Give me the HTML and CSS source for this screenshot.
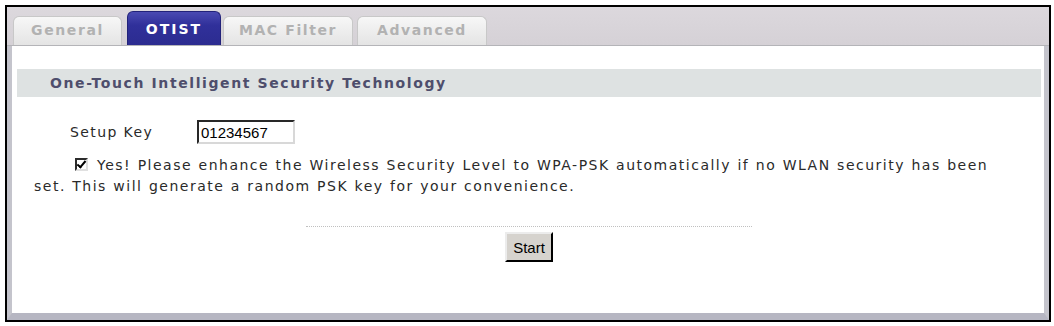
FILE: index.html
```html
<!DOCTYPE html>
<html lang="en">
  <head>
    <meta charset="UTF-8" />
    <title>Wireless LAN - OTIST</title>
    <link rel="stylesheet" href="styles.css">
  </head>
  <body>
    <div class="frame">
      <div class="tabbar">
        <div class="tab tab-general">General</div>
        <div class="tab tab-otist active">OTIST</div>
        <div class="tab tab-mac">MAC Filter</div>
        <div class="tab tab-advanced">Advanced</div>
      </div>
      <div class="panel">
        <div class="section-title">One-Touch Intelligent Security Technology</div>
        <div class="row">
          <label for="setupkey">Setup Key</label>
          <input type="text" id="setupkey" value="01234567" />
        </div>
        <div class="check-text">
          <span class="checkbox"></span>Yes! Please enhance the Wireless Security Level to WPA-PSK automatically if no WLAN security has been set. This will generate a random PSK key for your convenience.
        </div>
        <div class="divider"></div>
        <div class="actions">
          <button type="button">Start</button>
        </div>
      </div>
    </div>
  </body>
</html>
```

FILE: styles.css
```css
* {
  box-sizing: border-box;
  margin: 0;
  padding: 0;
}

body {
  background: #ffffff;
  padding: 5px 3px 5px 5px;
  font-family: "DejaVu Sans", Verdana, sans-serif;
}

.frame {
  border: 2px solid #000000;
  height: 317px;
  display: flex;
  flex-direction: column;
}

.tabbar {
  height: 39px;
  background: linear-gradient(#dcd8dd, #d5d1d6);
  display: flex;
  align-items: flex-end;
  padding-left: 6px;
  border-bottom: 1px solid #b4b4b8;
}

.tab {
  height: 29px;
  display: flex;
  align-items: center;
  justify-content: center;
  padding-bottom: 2px;
  background: linear-gradient(#f7f7f7, #e4e4e4);
  border: 1px solid #c8c8c8;
  border-bottom: none;
  border-radius: 6px 6px 0 0;
  color: #b2b2b2;
  font-size: 14px;
  font-weight: bold;
  letter-spacing: 1.6px;
}

.tab-general {
  width: 109px;
  margin-right: 5px;
}

.tab-otist {
  width: 94px;
  margin-right: 2px;
}

.tab-mac {
  width: 130px;
  margin-right: 4px;
}

.tab-advanced {
  width: 130px;
}

.tab.active {
  height: 34px;
  padding-bottom: 0;
  padding-top: 1px;
  background: linear-gradient(#4a4ab2, #30309a 40%, #2c2c90);
  border-color: #22227a;
  color: #ffffff;
  letter-spacing: 2px;
}

.panel {
  flex: 1;
  background: #ffffff;
  border-left: 5px solid #c4c4cc;
  border-right: 5px solid #c4c4cc;
  border-bottom: 7px solid #b6b6c2;
  padding: 23px 3px 0 5px;
}

.section-title {
  background: #dee2e2;
  height: 28px;
  display: flex;
  align-items: center;
  padding-left: 33px;
  color: #4e4e6c;
  font-size: 14px;
  font-weight: bold;
  letter-spacing: 1.6px;
}

.row {
  display: flex;
  align-items: center;
  margin-top: 23px;
  padding-left: 53px;
  font-size: 14px;
  letter-spacing: 1.4px;
  color: #2a2a2a;
}

.row label {
  width: 127px;
}

input {
  width: 98px;
  height: 24px;
  border: 2px inset #d8d8d8;
  border-top-color: #7c7c7c;
  border-left-color: #7c7c7c;
  font-family: "Liberation Sans", Arial, sans-serif;
  font-size: 15px;
  letter-spacing: 0;
  padding: 0 2px;
  color: #000000;
}

.check-text {
  margin-top: 11px;
  padding-left: 17px;
  padding-right: 48px;
  font-size: 14px;
  letter-spacing: 1.5px;
  word-spacing: 0.5px;
  line-height: 21px;
  color: #2a2a2a;
}

.checkbox {
  display: inline-block;
  width: 13px;
  height: 13px;
  margin: 0 9px 0 41px;
  vertical-align: -1px;
  border: 2px inset #e0e0e0;
  border-top-color: #808080;
  border-left-color: #808080;
  background: #ffffff;
  position: relative;
}

.checkbox::after {
  content: "";
  position: absolute;
  left: 2px;
  top: -1px;
  width: 3px;
  height: 7px;
  border: solid #000000;
  border-width: 0 2px 2px 0;
  transform: rotate(40deg);
}

.divider {
  width: 446px;
  margin: 29px auto 0;
  border-top: 1px dotted #c0c0c0;
}

.actions {
  display: flex;
  justify-content: center;
  margin-top: 5px;
}

button {
  width: 48px;
  height: 30px;
  background: #d6d3ce;
  border: 2px outset #ececec;
  border-right-color: #404040;
  border-bottom-color: #404040;
  font-family: "Liberation Sans", Arial, sans-serif;
  font-size: 15px;
  color: #000000;
}
```
